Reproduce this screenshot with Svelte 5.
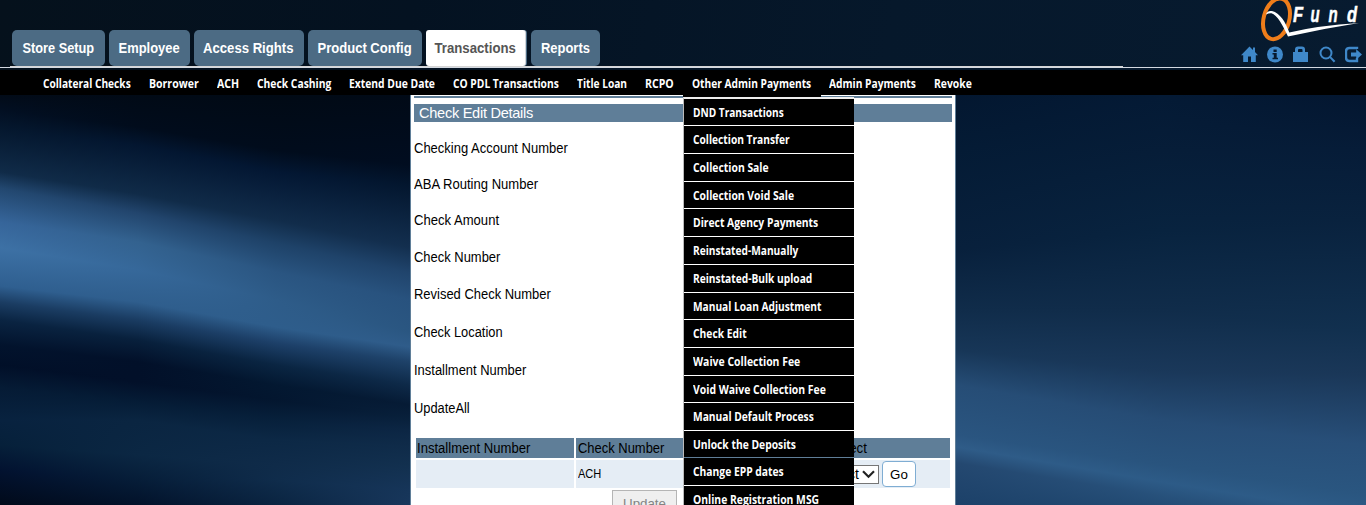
<script>
  const tabs = [
    ['Store Setup', 93, 72, 4], ['Employee', 81, 61, 4], ['Access Rights', 110, 90, 4],
    ['Product Config', 114, 94, 4], ['Transactions', 100, 81, 5], ['Reports', 69, 49, 0]
  ];
  const nav = [
    ['Collateral Checks', 88], ['Borrower', 50], ['ACH', 22], ['Check Cashing', 74],
    ['Extend Due Date', 86], ['CO PDL Transactions', 106], ['Title Loan', 50], ['RCPO', 29],
    ['Other Admin Payments', 119], ['Admin Payments', 87], ['Revoke', 38]
  ];
  const menu = [
    ['DND Transactions', 91, 26], ['Collection Transfer', 97, 27], ['Collection Sale', 76, 27],
    ['Collection Void Sale', 101, 26], ['Direct Agency Payments', 125, 27],
    ['Reinstated-Manually', 105, 27], ['Reinstated-Bulk upload', 119, 27],
    ['Manual Loan Adjustment', 128, 26], ['Check Edit', 54, 27], ['Waive Collection Fee', 107, 27],
    ['Void Waive Collection Fee', 133, 26], ['Manual Default Process', 121, 27],
    ['Unlock the Deposits', 103, 26], ['Change EPP dates', 91, 27], ['Online Registration MSG', 126, 27]
  ];
  const fields = [
    ['Checking Account Number', 154, 36], ['ABA Routing Number', 124, 36], ['Check Amount', 85, 36],
    ['Check Number', 86, 37], ['Revised Check Number', 137, 38], ['Check Location', 89, 38],
    ['Installment Number', 112, 38], ['UpdateAll', 56, 38]
  ];

  // Light-band colour stops, listed as [y, hex] for a few x positions
  const left = [
    [0, [[95,'020b18'],[110,'020f22'],[130,'05182f'],[172,'102b48'],[188,'22476f'],[222,'36659a'],[248,'3d71a5'],[286,'2f5f90'],[302,'1b3d63'],[320,'0a2442'],[345,'02132d'],[365,'010f28'],[388,'051b35'],[420,'08223f'],[445,'06203a'],[470,'021230'],[505,'010a1a']]],
    [137, [[95,'010a16'],[127,'010c1c'],[145,'031630'],[194,'102b48'],[213,'22456d'],[242,'33628f'],[270,'36689a'],[302,'2f5e8d'],[320,'1a3c62'],[340,'08203c'],[362,'021029'],[382,'021029'],[402,'051c36'],[420,'0a2541'],[455,'0b2743'],[480,'061d38'],[505,'02122a']]],
    [275, [[95,'010a15'],[150,'010c1c'],[172,'031733'],[220,'112c4a'],[243,'1e4268'],[272,'2a5581'],[300,'2e5c89'],[327,'2e5d8b'],[343,'1d4069'],[365,'0a2542'],[385,'031831'],[400,'03162f'],[420,'07203b'],[440,'0c2845'],[465,'0f2b49'],[480,'0f2c4b'],[505,'0a2441']]],
    [410, [[95,'010a17'],[165,'010d20'],[185,'03162e'],[248,'132f4f'],[273,'20446c'],[300,'28527e'],[332,'2a5681'],[347,'2f5c8a'],[362,'1e4269'],[385,'0e2a49'],[405,'061b35'],[418,'08203b'],[430,'0c2644'],[445,'0f2b49'],[465,'12304f'],[490,'163559'],[505,'18375c']]]
  ];
  const right = [
    [955, [[95,'031730'],[150,'041b35'],[250,'08203c'],[310,'102c4a'],[350,'173657'],[385,'264d76'],[435,'2a5580'],[447,'2f5c88'],[463,'244870'],[505,'1c4169']]],
    [1160, [[95,'041a35'],[150,'061d38'],[230,'08233f'],[310,'102c4a'],[372,'1a385a'],[420,'264c75'],[465,'29547e'],[482,'2d5b87'],[496,'27517b'],[515,'204870']]],
    [1366, [[95,'031630'],[150,'061c38'],[220,'09223e'],[330,'11304f'],[375,'1a3758'],[445,'284f79'],[495,'2a5680'],[515,'2d5b87'],[530,'27517b'],[550,'204870']]]
  ];
  const rgb = (h) => [0, 2, 4].map((i) => parseInt(h.slice(i, i + 2), 16));
  function strips(keys) {
    const out = [];
    for (let k = 0; k < keys.length - 1; k++) {
      const [x0, a] = keys[k];
      const [x1, b] = keys[k + 1];
      for (let x = x0; x < x1; x += 2) {
        const t = (x - x0) / (x1 - x0);
        const stops = a.map(([y, c], i) => {
          const p = rgb(c);
          const q = rgb(b[i][1]);
          const m = p.map((v, j) => (v + (q[j] - v) * t).toFixed(2));
          return `rgb(${m}) ${(y + (b[i][0] - y) * t - 95).toFixed(1)}px`;
        });
        out.push(`linear-gradient(${stops}) ${x - keys[0][0]}px 0 / 2px 410px no-repeat`);
      }
    }
    return out.join(',');
  }

  function squeeze(node, w) {
    node.style.transform = `scaleX(${w / node.offsetWidth})`;
  }
  function track(node, w) {
    node.style.letterSpacing = `${(w - node.getBoundingClientRect().width) / node.textContent.length}px`;
  }
</script>

<div class="page">
  <header>
    <ul class="tabs">
      {#each tabs as [label, w, tw, gap]}
        <li class:active={label === 'Transactions'} style="width:{w}px;margin-right:{gap}px"><span use:squeeze={tw}>{label}</span></li>
      {/each}
    </ul>
    <div class="brand">
      <svg class="logo" width="110" height="43" viewBox="0 0 110 43">
        <ellipse cx="24.5" cy="18.8" rx="12.8" ry="20.8" transform="rotate(15 24.5 18.8)" fill="none" stroke="#ef7d1a" stroke-width="4" />
        <path d="M14 14.500Q15 10.300 20 11C28 13 33.500 22 37.300 32.500Q66 25.500 107 23Q72 28.500 36 36.500C31 26 25 14.500 19.500 13.300Q17 13 14 14.500Z" fill="#fff" />
        <g fill="#fff" stroke="#fff" stroke-width=".5" font-family="Liberation Sans" font-weight="700" font-style="italic" font-size="22">
          <text transform="translate(41 22) scale(.75 1)">F</text>
          <text transform="translate(58.500 22) scale(.68 1)">u</text>
          <text transform="translate(76.500 22) scale(.68 1)">n</text>
          <text transform="translate(95 22) scale(.75 1)">d</text>
        </g>
      </svg>
      <div class="icons">
        <svg viewBox="0 0 17 17"><path d="M8.500 .5 12 4V1.500h2v4.600L17 9.200h-2.200V16H10v-5.500H7V16H2.200V9.200H0Z" /></svg>
        <svg viewBox="0 0 17 17"><circle cx="8" cy="8.500" r="8" /><path d="M6.500 3.500h3.200v2.600H6.500ZM5.500 7h4.200v4.700H11v1.600H5.500v-1.600h1.300V8.600H5.500Z" fill="#071a2f" /></svg>
        <svg viewBox="0 0 17 17"><path fill-rule="evenodd" d="M0 6h2V3.500Q2 .5 5 .5h4q3 0 3 3V6H15v10H0ZM5 6h4.500V4q0-1-1-1H6q-1 0-1 1Z" /></svg>
        <svg viewBox="0 0 17 17"><circle cx="7" cy="7" r="5.500" fill="none" stroke="#3f88c9" stroke-width="2" /><path d="m10.500 11.800 1.400-1.400 4.500 4.500-1.600 1.500Z" /></svg>
        <svg viewBox="0 0 17 17"><path d="M12 3V2H4.500Q1 2 1 5.500v6Q1 15 4.500 15H12v-3" fill="none" stroke="#3f88c9" stroke-width="2.400" /><path d="M6 6.500h5.200V3.300L17 8.500l-5.800 5.200v-3.200H6Z" /></svg>
      </div>
    </div>
  </header>

  <nav>
    {#each nav as [label, w], i}
      <div class="entry" style="width:{w}px">
        <span class="menutext" use:squeeze={w}>{label}</span>
        {#if i === 8}
          <div class="ledge"></div>
          <div class="submenu">
            {#each menu as [item, iw, h]}
              <div class="item" style="height:{h}px"><span class="menutext" use:squeeze={iw}>{item}</span></div>
            {/each}
          </div>
        {/if}
      </div>
    {/each}
  </nav>

  <div class="body">
    <div class="wall" style="background:{strips(left)}"></div>
    <main>
      <div class="rule"></div>
      <h1><span use:track={114}>Check Edit Details</span></h1>
      <div class="fields">
        {#each fields as [label, w, h]}
          <div style="height:{h}px"><span use:squeeze={w}>{label}</span></div>
        {/each}
      </div>
      <div class="grid">
        <div class="th first"><span use:squeeze={113}>Installment Number</span></div>
        <div class="th"><span use:squeeze={86}>Check Number</span></div>
        <div class="th end"><span use:squeeze={37}>Select</span></div>
        <div class="td"></div>
        <div class="td"><span class="small" use:squeeze={23}>ACH</span></div>
        <div class="td act">
          <div class="select"><span>Select</span><svg width="13" height="9" viewBox="0 0 13 9"><path d="m1 1.200 5.500 5.500L12 1.200" fill="none" stroke="#222" stroke-width="2.200" /></svg></div>
          <button class="go">Go</button>
        </div>
      </div>
      <button class="update" disabled>Update</button>
    </main>
    <div class="wall" style="background:{strips(right)}"></div>
  </div>
</div>

<style>
  :global(body) { margin: 0; overflow: hidden; }
  .page { width: 1366px; height: 505px; overflow: hidden; font-family: "Liberation Sans", Arial, sans-serif; font-size: 14px; color: #000; box-sizing: border-box; }
  span { display: inline-block; white-space: nowrap; transform-origin: 0 50%; }
  header { height: 70px; box-sizing: border-box; display: flex; justify-content: space-between; background: linear-gradient(#d3d9e2, #d3d9e2) 0 67px / 100% 1px no-repeat, linear-gradient(100deg, #05111c, #041221 30%, #06182b 65%, #071b30); }
  .tabs { list-style: none; margin: 30px 0 0 10px; padding: 0 0 0 2px; display: flex; width: 1111px; height: 36px; border-bottom: 1px solid #d5d5d5; }
  .tabs li { height: 36px; line-height: 37px; box-sizing: border-box; border-radius: 5px; background: #4c6b84; color: #fff; font-weight: 700; font-size: 14px; display: flex; justify-content: center; }
  .tabs span { transform-origin: 50% 50%; margin-left: -1px; }
  .tabs li.active { background: #fff; color: #555; border-radius: 3px; border-right: 1px solid #d0d5da; box-shadow: 1px 0 0 #4c6b84; }
  .brand { width: 126px; display: flex; flex-direction: column; }
  .logo { margin-left: 12px; flex: none; }
  .icons { display: flex; gap: 9px; margin-top: 3px; padding-left: 1px; }
  .icons svg { width: 17px; height: 17px; fill: #3f88c9; flex: none; }
  nav { height: 25px; background: #000; display: flex; gap: 18px; padding-left: 43px; box-sizing: border-box; position: relative; z-index: 2; }
  .entry { position: relative; height: 25px; flex: none; }
  .menutext { font: 700 12px/27px "Open Sans", "Noto Sans", sans-serif; color: #fff; }
  .ledge { position: absolute; left: -9px; top: 25px; width: 138px; height: 2px; background: #000; }
  .submenu { position: absolute; left: -9px; top: 27px; width: 170px; border-left: 1px solid #bbb; border-top: 2px solid #eee; display: flex; flex-direction: column; gap: 1px; background: linear-gradient(#fff 358px, #5f7e98 358px 360px, #fff 360px); }
  .item { background: #000; padding-left: 9px; }
  .body { display: flex; height: 410px; }
  .wall { width: 410px; flex: 1 1 0; background-color: #031730; }
  .wall:first-child { flex: none; }
  main { width: 546px; flex: none; box-sizing: border-box; border: 1px solid #5f7e98; border-width: 0 1px; background: #fff; padding: 1px 3px 0; }
  .rule { height: 2px; background: #5f7e98; }
  h1 { margin: 6px 0 0; height: 18px; line-height: 18px; background: #5f7e98; color: #fff; font-size: 14.6px; font-weight: 400; padding-left: 5px; }
  .fields { padding-top: 8px; height: 316px; box-sizing: border-box; }
  .fields div { display: flex; align-items: center; }
  .grid { display: grid; grid-template-columns: 158px 210px 1fr; grid-template-rows: 20px 28px; gap: 2px; margin: 0 2px; }
  .th { background: #5f7e98; line-height: 21px; padding-left: 2px; }
  .first { padding-left: 1px; }
  .end { padding-left: 42px; }
  .td { background: #e5edf5; line-height: 28px; padding-left: 2px; display: flex; align-items: center; }
  .small { font-size: 12px; }
  .act { padding-left: 31px; gap: 3px; }
  .select { width: 60px; height: 19px; box-sizing: border-box; border: 1px solid #767676; background: #fff; display: flex; align-items: center; justify-content: space-between; padding: 0 3px 0 0; line-height: 17px; }
  button { font-family: inherit; font-size: 13.33px; box-sizing: border-box; padding: 0; }
  .go { width: 34px; height: 26px; border: 1px solid #7fadd3; border-radius: 4px; background: #fff; }
  .update { display: block; width: 65px; height: 26px; margin: 2px 0 0 198px; border: 1px solid #b5b5b5; background: #efefef; color: #838383; }
</style>
